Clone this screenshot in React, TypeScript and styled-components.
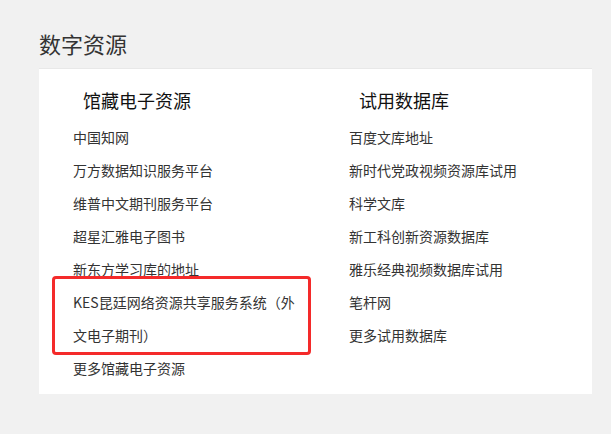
import * as React from 'react';
import styled, { createGlobalStyle } from 'styled-components';

const Global = createGlobalStyle`
	html, body {
		margin: 0;
		padding: 0;
		background: #f1f1f1;
	}
	body {
		font-family: "Noto Sans CJK SC", "Microsoft YaHei", sans-serif;
	}
`;

const Page = styled.div`
	padding: 28px 19px 0 39px;
	width: 611px;
	height: 434px;
	box-sizing: border-box;
	background: #f1f1f1;
`;

const Title = styled.h2`
	margin: 0 0 10px;
	font-size: 22px;
	line-height: 30px;
	font-weight: normal;
	color: #333;
`;

const Panel = styled.div`
	background: #fff;
	border-top: 1px solid #e8e8e8;
	display: grid;
	grid-template-columns: 276px 1fr;
	padding: 19px 0 9px 34px;
`;

const Column = styled.div`
	display: flex;
	flex-direction: column;
`;

const Heading = styled.h3`
	margin: 0 0 9px 10px;
	font-size: 18px;
	line-height: 24px;
	font-weight: normal;
	color: #111;
`;

const List = styled.ul`
	list-style: none;
	margin: 0;
	padding: 0;
	width: 226px;
`;

const Item = styled.li`
	font-size: 14px;
	line-height: 33px;
	color: #333;
	cursor: pointer;
`;

// the red annotation drawn round one entry
const Marked = styled(Item)`
	position: relative;

	&::after {
		content: '';
		position: absolute;
		left: -21px;
		right: -12px;
		top: -10px;
		bottom: -3px;
		border: 3px solid #f42a2a;
		border-radius: 4px;
		pointer-events: none;
	}
`;

const collection = [
	'中国知网',
	'万方数据知识服务平台',
	'维普中文期刊服务平台',
	'超星汇雅电子图书',
	'新东方学习库的地址',
];

const trial = [
	'百度文库地址',
	'新时代党政视频资源库试用',
	'科学文库',
	'新工科创新资源数据库',
	'雅乐经典视频数据库试用',
	'笔杆网',
	'更多试用数据库',
];

export default function App() {
	return (
		<Page>
			<Global />
			<Title>数字资源</Title>
			<Panel>
				<Column>
					<Heading>馆藏电子资源</Heading>
					<List>
						{collection.map(name => <Item key={name}>{name}</Item>)}
						<Marked>KES昆廷网络资源共享服务系统（外文电子期刊）</Marked>
						<Item>更多馆藏电子资源</Item>
					</List>
				</Column>
				<Column>
					<Heading>试用数据库</Heading>
					<List>
						{trial.map(name => <Item key={name}>{name}</Item>)}
					</List>
				</Column>
			</Panel>
		</Page>
	);
}
